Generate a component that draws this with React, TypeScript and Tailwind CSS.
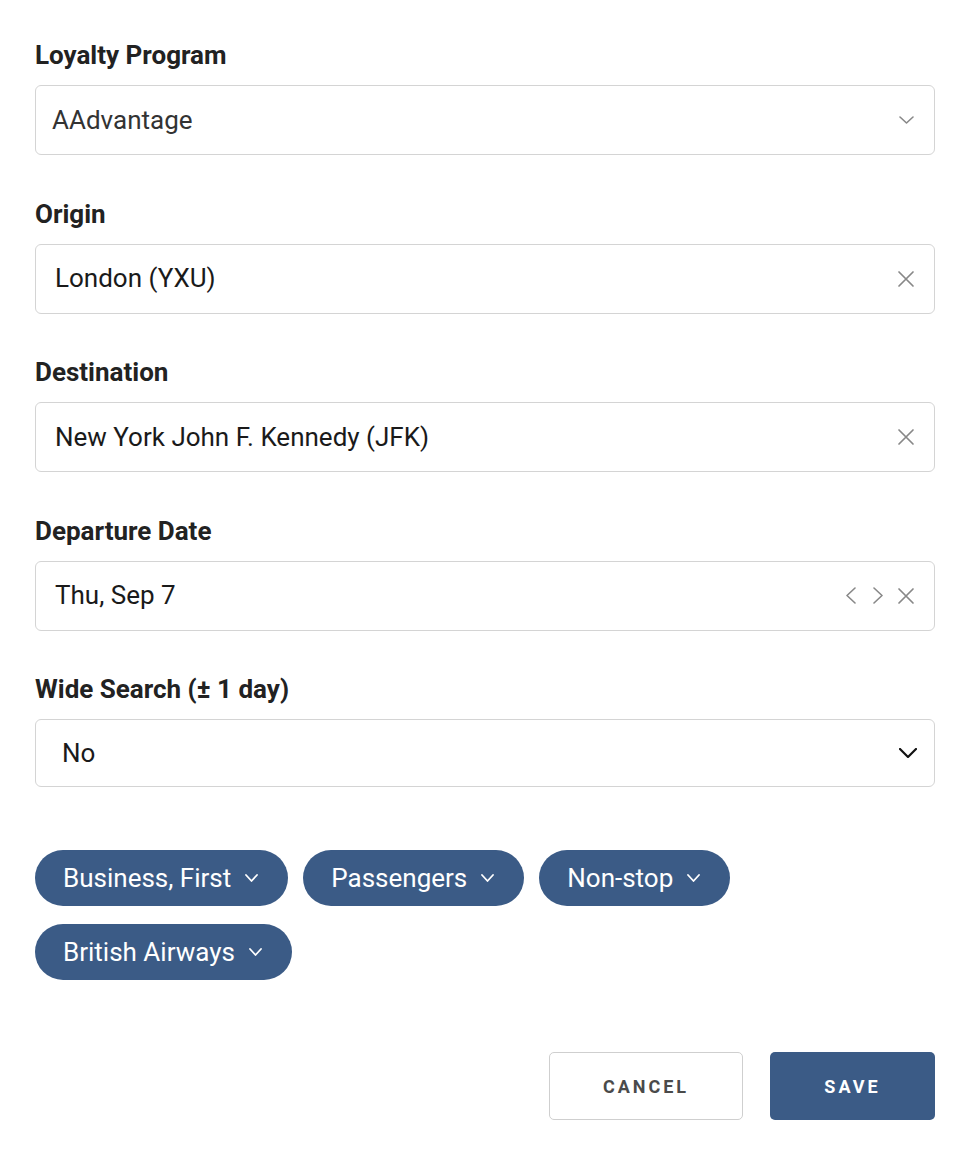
const font = { fontFamily: 'Roboto, "Liberation Sans", sans-serif' }

function Chevron({ dir, w, h, sw = 1.5, className }: { dir: 'down' | 'left' | 'right'; w: number; h: number; sw?: number; className?: string }) {
  const pts =
    dir === 'down'
      ? `1,1 ${w / 2},${h - 1} ${w - 1},1`
      : dir === 'left'
        ? `${w - 1},1 1,${h / 2} ${w - 1},${h - 1}`
        : `1,1 ${w - 1},${h / 2} 1,${h - 1}`
  return (
    <svg width={w} height={h} viewBox={`0 0 ${w} ${h}`} className={className} fill="none">
      <polyline points={pts} stroke="currentColor" strokeWidth={sw} strokeLinecap="round" strokeLinejoin="round" />
    </svg>
  )
}

function Cross() {
  return (
    <svg width="18" height="18" viewBox="0 0 18 18" fill="none">
      <path d="M2 2 16 16M16 2 2 16" stroke="currentColor" strokeWidth="1.7" strokeLinecap="round" />
    </svg>
  )
}

function Label({ children }: { children: React.ReactNode }) {
  return <div className="text-[26px] font-bold leading-[30px] text-[#222] mb-[15px]">{children}</div>
}

function Box({ children, icons }: { children: React.ReactNode; icons?: React.ReactNode }) {
  return (
    <div className="h-[70px] border border-[#d4d4d4] rounded-[6px] flex items-center pl-[19px] pr-[19px]">
      <span className="flex-1 text-[26px] text-[#1a1a1a]">{children}</span>
      <div className="flex items-center text-[#888]">{icons}</div>
    </div>
  )
}

function Pill({ label }: { label: string }) {
  return (
    <button className="h-[56px] rounded-full bg-[#3b5b86] text-white text-[26px] pl-[28px] pr-[30px] flex items-center gap-[14px]">
      {label}
      <Chevron dir="down" w={13} h={8} sw={1.8} />
    </button>
  )
}

export default function App() {
  return (
    <div className="bg-white min-h-[1170px] px-[35px] pt-[40px]" style={font}>
      <div className="w-[900px] flex flex-col gap-[43.5px]">
        <div>
          <Label>Loyalty Program</Label>
          <div className="h-[70px] border border-[#d4d4d4] rounded-[6px] flex items-center pl-[16px] pr-[20px]">
            <span className="flex-1 text-[26px] text-[#333]">AAdvantage</span>
            <Chevron dir="down" w={15} h={8} sw={1.6} className="text-[#888]" />
          </div>
        </div>
        <div>
          <Label>Origin</Label>
          <Box icons={<Cross />}>London (YXU)</Box>
        </div>
        <div>
          <Label>Destination</Label>
          <Box icons={<Cross />}>New York John F. Kennedy (JFK)</Box>
        </div>
        <div>
          <Label>Departure Date</Label>
          <Box
            icons={
              <>
                <Chevron dir="left" w={10} h={17} sw={1.6} className="mr-[17px]" />
                <Chevron dir="right" w={10} h={17} sw={1.6} className="mr-[14px]" />
                <Cross />
              </>
            }
          >
            Thu, Sep 7
          </Box>
        </div>
        <div>
          <Label>Wide Search (± 1 day)</Label>
          <div className="h-[68px] border border-[#d4d4d4] rounded-[6px] flex items-center pl-[26px] pr-[17px]">
            <span className="flex-1 text-[26px] text-[#1a1a1a]">No</span>
            <Chevron dir="down" w={18} h={10} sw={2.2} className="text-[#111]" />
          </div>
        </div>
      </div>

      <div className="w-[900px] flex flex-wrap gap-x-[15px] gap-y-[18px] mt-[63px]">
        <Pill label="Business, First" />
        <Pill label="Passengers" />
        <Pill label="Non-stop" />
        <Pill label="British Airways" />
      </div>

      <div className="w-[900px] flex justify-end gap-[27px] mt-[72px]">
        <button className="w-[194px] h-[68px] border border-[#cfcfcf] rounded-[5px] bg-white text-[18px] font-bold tracking-[3px] text-[#4a4a4a]">
          CANCEL
        </button>
        <button className="w-[165px] h-[68px] rounded-[5px] bg-[#3b5b86] text-[18px] font-bold tracking-[3px] text-white">
          SAVE
        </button>
      </div>
    </div>
  )
}
